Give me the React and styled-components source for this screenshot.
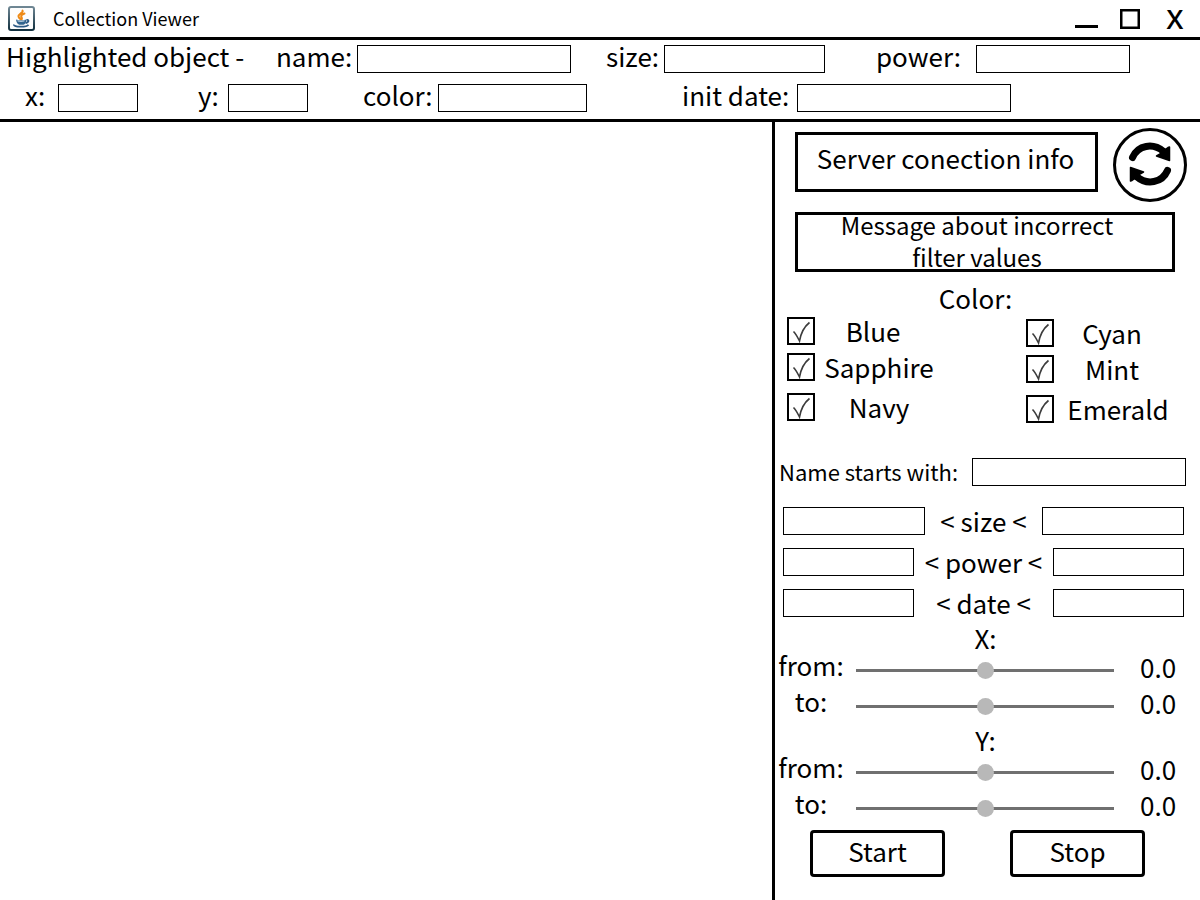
import React, { useState } from "react";
import styled, { createGlobalStyle } from "styled-components";

const GlobalStyle = createGlobalStyle`
  *, *::before, *::after { box-sizing: border-box; }
  body {
    margin: 0;
    background: #fff;
    color: #000;
    font-family: "Noto Sans CJK SC", "Noto Sans", sans-serif;
    font-size: 26px;
    line-height: 32px;
  }
  button, input { font: inherit; color: inherit; }
`;

const Window = styled.div`
  display: flex;
  flex-direction: column;
  min-height: 100vh;
`;

const TitleBar = styled.header`
  display: flex;
  align-items: center;
  height: 40px;
  padding: 0 12px 0 8px;
  border-bottom: 3px solid #000;
`;

const Title = styled.h1`
  flex: 1;
  margin: 0 0 0 17px;
  padding-bottom: 2px;
  font-size: 18px;
  line-height: 24px;
  font-weight: 400;
`;

const WindowControls = styled.div`
  display: flex;
  align-items: center;
  gap: 22px;
`;

const ControlButton = styled.button`
  display: flex;
  align-items: center;
  justify-content: center;
  width: ${(p) => p.$width}px;
  height: 32px;
  padding: 0;
  border: 0;
  background: none;
  font-family: "Open Sans", sans-serif;
  font-size: 27px;
  font-weight: 600;
`;

const InfoPanel = styled.section`
  display: flex;
  flex-direction: column;
  gap: 7px;
  padding: 3px 0 5px;
  border-bottom: 3px solid #000;
`;

const InfoRow = styled.div`
  display: grid;
  grid-template-columns: ${(p) => p.$columns};
  align-items: center;
  height: 32px;
  padding-left: ${(p) => p.$inset}px;
  white-space: nowrap;
`;

const Field = styled.label`
  display: flex;
  align-items: center;
`;

const FieldName = styled.span`
  width: ${(p) => p.$width}px;
  padding-bottom: 6px;
  line-height: 26px;
  white-space: nowrap;
`;

const FilterName = styled.span`
  padding-bottom: 2px;
  font-size: 22px;
  line-height: 28px;
  white-space: nowrap;
`;

const TextBox = styled.input`
  width: ${(p) => p.$width}px;
  height: 28px;
  padding: 0 6px;
  border: 1px solid #000;
  border-radius: 0;
  background: #fff;
  font-size: 18px;
`;

const Body = styled.main`
  display: flex;
  flex: 1;
`;

const Canvas = styled.section`
  flex: 1;
`;

const Sidebar = styled.aside`
  display: flex;
  flex-direction: column;
  flex: 0 0 428px;
  padding: 6px 0 22px;
  border-left: 3px solid #000;
`;

const ServerRow = styled.div`
  display: flex;
  align-items: flex-start;
  justify-content: space-between;
  padding: 0 13px 0 20px;
`;

const StatusBox = styled.div`
  display: flex;
  align-items: center;
  justify-content: center;
  width: ${(p) => p.$width}px;
  height: 60px;
  border: 3px solid #000;
  text-align: center;
`;

const ServerStatus = styled(StatusBox)`
  margin-top: 4px;
  padding: 0 2px 8px 0;
`;

const FilterMessage = styled(StatusBox)`
  margin: 10px 0 0 20px;
  padding: 0 16px 2px 0;
  font-size: 24px;
`;

const RefreshButton = styled.button`
  width: 74px;
  height: 74px;
  padding: 0;
  border: 3px solid #000;
  border-radius: 50%;
  background: #fff;

  svg { display: block; }
`;

const Heading = styled.h2`
  margin: 0;
  padding-right: 4px;
  font-size: 26px;
  line-height: 29px;
  font-weight: 400;
  text-align: center;
`;

const ColorHeading = styled(Heading)`
  margin-top: 11px;
  padding-right: 24px;
`;

const ColorGroup = styled.div`
  display: flex;
  justify-content: space-between;
  align-items: flex-start;
  margin-top: 5px;
  padding: 0 18px 0 12px;
`;

const ColorColumn = styled.div`
  display: grid;
  grid-template-rows: 36px 40px 28px;
  width: 156px;
  margin-top: ${(p) => p.$top}px;
`;

const ColorOption = styled.label`
  display: flex;
  align-items: center;
  height: 28px;
`;

const OptionName = styled.span`
  width: ${(p) => (p.$narrow ? 116 : 128)}px;
  text-align: center;
`;

const Tick = styled.span`
  position: relative;
  width: 28px;
  height: 28px;

  input {
    display: block;
    width: 28px;
    height: 28px;
    margin: 0;
    appearance: none;
    border: 2px solid #000;
    background: #fff;
  }

  svg {
    position: absolute;
    inset: 0;
    visibility: hidden;
    pointer-events: none;
  }

  input:checked + svg { visibility: visible; }
`;

const NameFilter = styled(Field)`
  justify-content: space-between;
  margin-top: 34px;
  padding: 0 14px 0 4px;
`;

const Ranges = styled.div`
  display: flex;
  flex-direction: column;
  gap: 13px;
  margin-top: 20px;
  padding: 0 16px 0 8px;
`;

const RangeRow = styled.div`
  display: flex;
  align-items: center;
  justify-content: space-between;
  height: 28px;
`;

const AxisGroup = styled.section`
  margin-top: ${(p) => p.$top}px;
`;

const SliderRow = styled.div`
  display: grid;
  grid-template-columns: 74px 1fr 86px;
  align-items: center;
  height: 36px;
  padding-left: 3px;
  line-height: 26px;
`;

const SliderName = styled.label`
  padding: 0 8px 10px 0;
  text-align: center;
`;

const Slider = styled.input`
  appearance: none;
  width: 258px;
  height: 17px;
  margin: 0 0 0 4px;
  background: none;

  &::-webkit-slider-runnable-track {
    height: 3px;
    background: #707070;
  }

  &::-webkit-slider-thumb {
    appearance: none;
    width: 17px;
    height: 17px;
    margin-top: -7px;
    border-radius: 50%;
    background: #b8b8b8;
  }
`;

const SliderValue = styled.output`
  padding: 0 0 6px 26px;
`;

const Actions = styled.div`
  display: flex;
  justify-content: space-between;
  margin-top: 4px;
  padding: 0 55px 0 35px;
`;

const ActionButton = styled.button`
  width: 135px;
  height: 47px;
  padding: 0 0 6px;
  border: 3px solid #000;
  border-radius: 4px;
  background: #fff;
`;

function JavaIcon() {
  return (
    <svg width="28" height="26" viewBox="0 0 28 26" aria-hidden="true">
      <defs>
        <linearGradient id="frame" x1="0" y1="0" x2="0" y2="1">
          <stop offset="0" stopColor="#6f8794" />
          <stop offset="1" stopColor="#12303f" />
        </linearGradient>
      </defs>
      <rect x="1" y="1" width="25" height="23" rx="2" fill="#fdfdfd" stroke="url(#frame)" strokeWidth="2" />
      <path d="M14.5 4.5c1.5 2-4.500 3.500-4 6 .2 1.300 1.300 2 2.200 2.800M16.500 7.500c-2 .7-3.500 1.800-3.300 3 .2 1.100 1.300 1.300.5 2.800" fill="none" stroke="#ee8a16" strokeWidth="2" strokeLinecap="round" />
      <path d="M8 13.500c2 .9 8 .9 10.500 0-.2 2.800-1.500 4.800-3 5.300h-4.300C9.500 18.300 8.200 16 8 13.500z" fill="#33658f" />
      <path d="M18.500 14c2.500-.8 3 2-1 3.200M6 18.500c-1 2.800 12.500 3 14.500.3" fill="none" stroke="#2c5a85" strokeWidth="1.800" />
      <path d="M9.500 14.800c2 .6 5 .6 7 0" stroke="#dceaf4" fill="none" />
    </svg>
  );
}

function RefreshIcon() {
  return (
    <svg width="68" height="68" viewBox="16 11 68 68" aria-hidden="true">
      <g id="arrow">
        <path d="M32.500 37.500C38 25 53 22.500 63.500 31.500" fill="none" stroke="#000" strokeWidth="7" strokeLinecap="round" />
        <path d="M63 31L68 27.500L69.500 27V40.500L56.500 36L60 34Z" fill="#000" stroke="#000" strokeWidth="1.500" strokeLinejoin="round" />
      </g>
      <use href="#arrow" transform="rotate(180 50 44)" />
    </svg>
  );
}

function InfoField({ name, labelWidth, width }) {
  return (
    <Field>
      <FieldName $width={labelWidth}>{name}</FieldName>
      <TextBox $width={width} type="text" readOnly />
    </Field>
  );
}

function ColorCheck({ name, narrow }) {
  return (
    <ColorOption>
      <Tick>
        <input type="checkbox" defaultChecked />
        <svg width="28" height="28" viewBox="0 0 28 28" aria-hidden="true">
          <path d="M6.500 14.500C9 17 10.500 20 12.500 24C14 16 18 9 22.500 5.500" fill="none" stroke="#3c3c3c" strokeWidth="1.600" />
        </svg>
      </Tick>
      <OptionName $narrow={narrow}>{name}</OptionName>
    </ColorOption>
  );
}

function RangeFilter({ name, width }) {
  return (
    <RangeRow>
      <TextBox $width={width} type="text" aria-label={`Minimum ${name}`} />
      <span>&lt; {name} &lt;</span>
      <TextBox $width={width} type="text" aria-label={`Maximum ${name}`} />
    </RangeRow>
  );
}

function AxisSlider({ id, name }) {
  const [value, setValue] = useState(0);
  return (
    <SliderRow>
      <SliderName htmlFor={id}>{name}</SliderName>
      <Slider
        id={id}
        type="range"
        min="-100"
        max="100"
        step="0.1"
        value={value}
        onChange={(e) => setValue(Number(e.target.value))}
      />
      <SliderValue htmlFor={id}>{value.toFixed(1)}</SliderValue>
    </SliderRow>
  );
}

export default function App() {
  return (
    <Window>
      <GlobalStyle />
      <TitleBar>
        <JavaIcon />
        <Title>Collection Viewer</Title>
        <WindowControls>
          <ControlButton $width={23} aria-label="Minimize">
            <svg width="23" height="20" viewBox="0 0 23 20"><path d="M0 17.500H23" stroke="#000" strokeWidth="3" /></svg>
          </ControlButton>
          <ControlButton $width={20} aria-label="Maximize">
            <svg width="20" height="20" viewBox="0 0 20 20"><rect x="1.250" y="1.250" width="17.500" height="17.500" fill="none" stroke="#000" strokeWidth="2.500" /></svg>
          </ControlButton>
          <ControlButton $width={26} aria-label="Close">X</ControlButton>
        </WindowControls>
      </TitleBar>

      <InfoPanel>
        <InfoRow $columns="270px 330px 270px 254px" $inset={6}>
          <FieldName>Highlighted object -</FieldName>
          <InfoField name="name:" labelWidth={81} width={214} />
          <InfoField name="size:" labelWidth={58} width={161} />
          <InfoField name="power:" labelWidth={100} width={154} />
        </InfoRow>
        <InfoRow $columns="173px 165px 319px 329px" $inset={25}>
          <InfoField name="x:" labelWidth={33} width={80} />
          <InfoField name="y:" labelWidth={30} width={80} />
          <InfoField name="color:" labelWidth={75} width={149} />
          <InfoField name="init date:" labelWidth={115} width={214} />
        </InfoRow>
      </InfoPanel>

      <Body>
        <Canvas aria-label="Collection" />
        <Sidebar>
          <ServerRow>
            <ServerStatus $width={303}>Server conection info</ServerStatus>
            <RefreshButton aria-label="Refresh"><RefreshIcon /></RefreshButton>
          </ServerRow>
          <FilterMessage $width={380}>
            Message about incorrect<br />filter values
          </FilterMessage>

          <ColorHeading>Color:</ColorHeading>
          <ColorGroup>
            <ColorColumn $top={0}>
              <ColorCheck name="Blue" narrow />
              <ColorCheck name="Sapphire" />
              <ColorCheck name="Navy" />
            </ColorColumn>
            <ColorColumn $top={2}>
              <ColorCheck name="Cyan" narrow />
              <ColorCheck name="Mint" narrow />
              <ColorCheck name="Emerald" />
            </ColorColumn>
          </ColorGroup>

          <NameFilter>
            <FilterName>Name starts with:</FilterName>
            <TextBox $width={214} type="text" />
          </NameFilter>

          <Ranges>
            <RangeFilter name="size" width={142} />
            <RangeFilter name="power" width={131} />
            <RangeFilter name="date" width={131} />
          </Ranges>

          <AxisGroup $top={6}>
            <Heading>X:</Heading>
            <AxisSlider id="x-from" name="from:" />
            <AxisSlider id="x-to" name="to:" />
          </AxisGroup>
          <AxisGroup $top={1}>
            <Heading>Y:</Heading>
            <AxisSlider id="y-from" name="from:" />
            <AxisSlider id="y-to" name="to:" />
          </AxisGroup>

          <Actions>
            <ActionButton>Start</ActionButton>
            <ActionButton>Stop</ActionButton>
          </Actions>
        </Sidebar>
      </Body>
    </Window>
  );
}
